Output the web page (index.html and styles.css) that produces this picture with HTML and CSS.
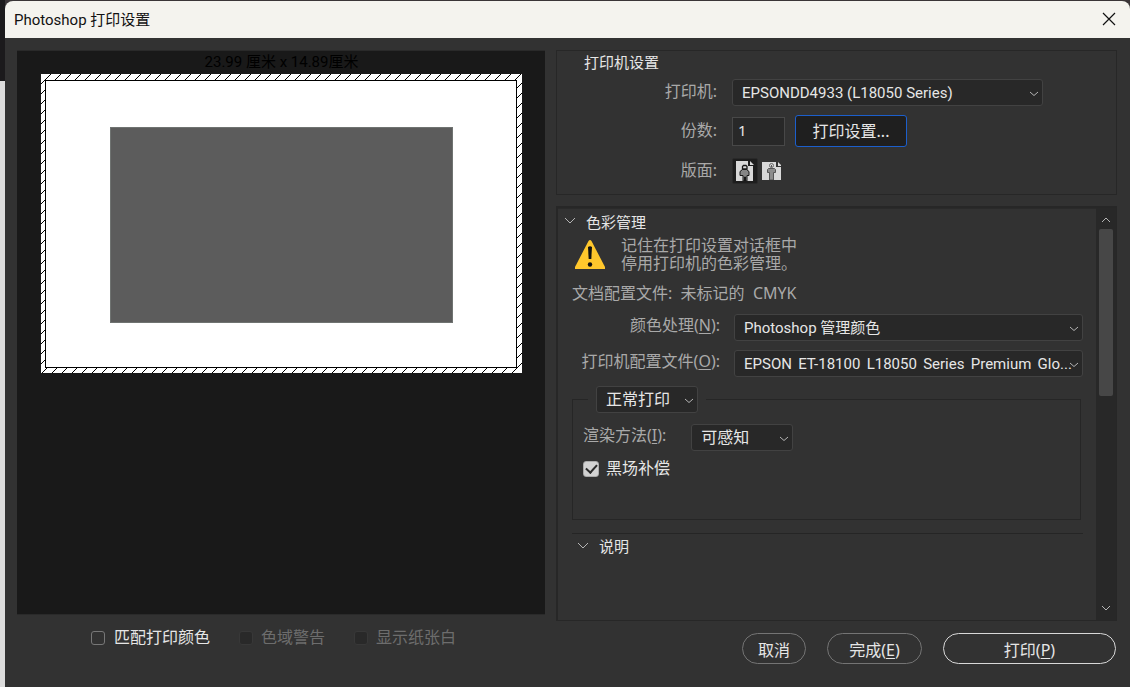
FILE: index.html
```html
<!DOCTYPE html>
<html lang="zh-CN">
<head>
<meta charset="utf-8">
<title>Photoshop 打印设置</title>
<link rel="stylesheet" href="styles.css">
</head>
<body>
<div class="desktop">
<div class="window">
  <header class="titlebar">
    <h1 class="title">Photoshop 打印设置</h1>
    <button class="close" type="button" aria-label="关闭">
      <svg width="14" height="14" viewBox="0 0 14 14"><path d="M1 1l12 12M13 1L1 13" stroke="#111" stroke-width="1.2" fill="none"/></svg>
    </button>
  </header>
  <main class="content">
    <section class="left">
      <div class="preview">
        <p class="size">23.99 厘米 x 14.89厘米</p>
        <div class="paper">
          <svg class="hatch" width="100%" height="100%" aria-hidden="true">
            <defs><pattern id="lines" width="10" height="10" patternUnits="userSpaceOnUse"><path d="M0 9h1v-1h1v-1h1v-1h1v-1h1v-1h1v-1h1v-1h1v-1h1v-1h1v1h-1v1h-1v1h-1v1h-1v1h-1v1h-1v1h-1v1h-1v1h-1v1h-1z" fill="#000"/></pattern></defs>
            <rect width="100%" height="100%" fill="url(#lines)"/>
          </svg>
          <div class="sheet"><div class="picture"></div></div>
        </div>
      </div>
      <div class="checks">
        <label class="check"><input type="checkbox">匹配打印颜色</label>
        <label class="check off"><input type="checkbox" disabled>色域警告</label>
        <label class="check off"><input type="checkbox" disabled>显示纸张白</label>
      </div>
    </section>
    <section class="right">
      <div class="printer">
        <h2 class="heading">打印机设置</h2>
        <div class="row">
          <label class="label" for="printer">打印机:</label>
          <div class="select wide"><select id="printer"><option>EPSONDD4933 (L18050 Series)</option></select><svg class="arrow" viewBox="0 0 10 6"><path d="M1 1l4 3.500 4-3.500"/></svg></div>
        </div>
        <div class="row tall">
          <label class="label" for="copies">份数:</label>
          <input class="copies" id="copies" type="text" value="1">
          <button class="setup" type="button">打印设置...</button>
        </div>
        <div class="row icons">
          <span class="label">版面:</span>
          <button class="orient on" type="button" aria-label="纵向">
            <svg width="18" height="20" viewBox="0 0 18 20"><path d="M0 0h12v5h5v15H0z" fill="#d8d8d8"/><path d="M14 0l4 4h-4z" fill="#d8d8d8"/><path d="M6.500 8.500h4l2.500 2v4h-2V20h-1.500v-4h-1v4H7v-5.500H4v-4z" fill="#858585" stroke="#161616"/><path d="M6.500 8V5.500l1-1h2.500l1 1V8z" fill="#d8d8d8" stroke="#161616" stroke-width="1.300"/></svg>
          </button>
          <button class="orient" type="button" aria-label="横向">
            <svg width="19" height="18" viewBox="0 0 19 18"><path d="M0 0h14v5h5v13H0z" fill="#d8d8d8"/><path d="M16 0l3 3v1h-3z" fill="#d8d8d8"/><path d="M6.500 6.500h6l1 1v3h-2V18h-4v-7.500h-2v-3z" fill="#8c8c8c" stroke="#555"/><circle cx="9.500" cy="3.500" r="2" fill="#d8d8d8" stroke="#666"/><path d="M9.500 3v2" stroke="#555"/></svg>
          </button>
        </div>
      </div>
      <div class="scroller">
        <div class="pane">
          <h2 class="section"><svg class="fold" viewBox="0 0 12 8"><path d="M1 1l5 5 5-5"/></svg>色彩管理</h2>
          <div class="warning">
            <svg width="30" height="29" viewBox="0 0 30 29"><path d="M13.500 1Q15-1 16.500 1L30 27v2H0v-2z" fill="#ffc72c"/><path d="M13 7q2-1.500 4 0l-.7 12h-2.600z" fill="#111"/><circle cx="15" cy="24.500" r="2.200" fill="#111"/></svg>
            <p>记住在打印设置对话框中<br>停用打印机的色彩管理。</p>
          </div>
          <p class="profile">文档配置文件:&nbsp; 未标记的&nbsp; CMYK</p>
          <div class="field">
            <label class="label" for="handling">颜色处理(<u>N</u>):</label>
            <div class="select"><select id="handling"><option>Photoshop 管理颜色</option></select><svg class="arrow" viewBox="0 0 10 6"><path d="M1 1l4 3.500 4-3.500"/></svg></div>
          </div>
          <div class="field">
            <label class="label" for="icc">打印机配置文件(<u>O</u>):</label>
            <div class="select"><select id="icc"><option>EPSON&#8198; ET-18100&#8198; L18050&#8198; Series&#8198; Premium&#8198; Glo...</option></select><svg class="arrow" viewBox="0 0 10 6"><path d="M1 1l4 3.500 4-3.500"/></svg></div>
          </div>
          <fieldset class="group">
            <legend><span class="select small"><select aria-label="打印类型"><option>正常打印</option></select><svg class="arrow" viewBox="0 0 10 6"><path d="M1 1l4 3.500 4-3.500"/></svg></span></legend>
            <div class="intent">
              <label for="intent">渲染方法(<u>I</u>):</label>
              <span class="select small"><select id="intent"><option>可感知</option></select><svg class="arrow" viewBox="0 0 10 6"><path d="M1 1l4 3.500 4-3.500"/></svg></span>
            </div>
            <label class="check"><input type="checkbox" checked>黑场补偿</label>
          </fieldset>
          <h2 class="section note"><svg class="fold" viewBox="0 0 12 8"><path d="M1 1l5 5 5-5"/></svg>说明</h2>
        </div>
        <div class="bar">
          <svg class="tip" viewBox="0 0 10 6"><path d="M1 5l4-4 4 4"/></svg>
          <div class="track"><div class="thumb"></div></div>
          <svg class="tip" viewBox="0 0 10 6"><path d="M1 1l4 4 4-4"/></svg>
        </div>
      </div>
      <footer class="actions">
        <button class="pill cancel" type="button">取消</button>
        <button class="pill done" type="button">完成(<u>E</u>)</button>
        <button class="pill print" type="button">打印(<u>P</u>)</button>
      </footer>
    </section>
  </main>
</div>
</div>
</body>
</html>
```
FILE: styles.css
```css
* { box-sizing: border-box; }
body, h1, h2, p { margin: 0; }
body, button, input, select {
  font-family: "Noto Sans", "Noto Sans CJK SC", sans-serif;
  font-size: 15px;
  font-weight: 400;
}
body { color: #e6e6e6; }
u { text-underline-offset: 2px; }
button { color: inherit; cursor: pointer; }

.desktop {
  display: flex;
  min-height: 100vh;
  padding: 1px 0 0 5px;
  background: linear-gradient(#1b1a1c 81px, #dcdcdc 81px);
}
.window {
  flex: 1;
  display: flex;
  flex-direction: column;
  background: #323232;
  border-radius: 8px 8px 0 0;
  box-shadow: 0 -4px 0 4px #3a3537;
  clip-path: inset(-1px 0 0 0);
}
.titlebar {
  display: flex;
  align-items: center;
  justify-content: space-between;
  height: 37px;
  padding: 0 14px 0 9px;
  background: #f4f3ee;
  border-radius: 8px 8px 0 0;
}
.title { color: #111; font-family: Roboto, "Noto Sans CJK SC", sans-serif; font-size: 15px; font-weight: 400; padding-bottom: 3px; }
.close { display: flex; padding: 0 0 1px; border: 0; background: none; }

.content {
  flex: 1;
  display: grid;
  grid-template-columns: 528fr 561fr;
  gap: 11px;
  padding: 12px 13px 23px 12px;
}
.left, .right { display: flex; flex-direction: column; min-width: 0; }

.preview {
  flex: 1;
  padding: 0 23px 0 24px;
  background: #191919;
  border: solid #2a2a2a;
  border-width: 1px 0;
}
.size { color: #000; line-height: 22px; padding-bottom: 1px; text-align: center; font-family: Roboto, "Noto Sans CJK SC", sans-serif; }
.paper {
  position: relative;
  display: flex;
  aspect-ratio: 481 / 299;
  padding: 6px 5px 5px 4px;
  background: #fff;
}
.hatch { position: absolute; inset: 0; }
.sheet {
  position: relative;
  flex: 1;
  display: flex;
  align-items: center;
  justify-content: center;
  padding: 2px 0 0 1px;
  background: #fff;
  border: 1px solid #000;
}
.picture { width: 73%; height: 69%; background: #5c5c5c; border: 1px solid #6f7371; }

.checks { display: flex; gap: 29px; height: 49px; padding: 11px 0 0 74px; }
.check { display: flex; align-items: center; gap: 9px; height: 20px; font-size: 16px; }
.check.off { color: #6d6d6d; gap: 8px; }
.check input {
  appearance: none;
  width: 14px;
  height: 14px;
  margin: 3px 0 0;
  border: 1px solid #777;
  border-radius: 3px;
}
.check.off input { border-color: #383838; background: #292929; }
.check input:checked {
  width: 16px;
  height: 16px;
  border-color: #aaa;
  background: linear-gradient(#d2d2d2, #d2d2d2);
  display: grid;
  place-items: center;
}
.check input:checked::after {
  content: "";
  width: 5px;
  height: 9px;
  margin-bottom: 2px;
  border: solid #2b2b2b;
  border-width: 0 2px 2px 0;
  transform: rotate(42deg);
}

.printer { height: 145px; border: 1px solid #272727; }
.heading { padding-left: 27px; font-size: 15px; font-weight: 400; line-height: 23px; }
.row { display: flex; align-items: center; height: 37px; }
.row.tall { height: 40px; }
.row.icons { height: 40px; }
.label { color: #a9a9a9; font-size: 16px; text-align: right; white-space: nowrap; }
.row .label { width: 160px; margin-right: 15px; padding-bottom: 3px; line-height: 22px; }
.select { position: relative; display: block; height: 27px; min-width: 0; }
.select.wide { width: 311px; }
.select.small { width: 102px; }
.select select {
  appearance: none;
  display: block;
  width: 100%;
  height: 27px;
  padding: 0 9px;
  font-family: Roboto, "Noto Sans CJK SC", sans-serif;
  color: #e6e6e6;
  background: #282828;
  border: 1px solid #424242;
  border-radius: 3px;
}
.select.small select { font-size: 16px; }
.arrow {
  position: absolute;
  right: 4px;
  top: 12px;
  width: 10px;
  height: 6px;
  pointer-events: none;
}
.arrow path, .fold path, .tip path { fill: none; stroke: #b5b5b5; stroke-width: 1; }
.copies {
  width: 53px;
  height: 29px;
  margin-right: 10px;
  padding: 0 5px 2px;
  color: #e6e6e6;
  background: #282828;
  border: 1px solid #484848;
}
.setup {
  width: 112px;
  height: 32px;
  padding: 0 0 3px;
  font-size: 16px;
  background: #1f1f1f;
  border: 1px solid #1c5fcc;
  border-radius: 3px;
}
.orient {
  display: grid;
  place-items: center;
  width: 26px;
  height: 26px;
  padding: 0;
  border: 1px solid transparent;
  border-radius: 2px;
  background: none;
}
.orient.on { background: #1d1d1d; border-color: #292929; }

.scroller { flex: 1; display: flex; margin-top: 11px; border: solid #272727; border-width: 2px 1px 1px 2px; }
.pane { flex: 1; min-width: 0; padding: 0 13px 0 14px; border-top: 1px solid #2a2a2a; }
.section { display: flex; align-items: center; gap: 10px; height: 24px; margin-left: -8px; font-size: 15px; font-weight: 400; }
.fold { width: 12px; height: 8px; }
.warning { display: flex; align-items: center; gap: 16px; height: 42px; padding-left: 3px; color: #a9a9a9; font-size: 16px; line-height: 18px; }
.profile { height: 39px; color: #a9a9a9; font-size: 16px; line-height: 36px; }
.field { display: grid; grid-template-columns: 148px 1fr; gap: 14px; height: 27px; margin-bottom: 9px; }
.field .label { line-height: 22px; }
.group {
  height: 134px;
  margin: 0 2px 0 0;
  padding: 11px 10px 0;
  border: 1px solid #262626;
}
.group legend { margin-left: 5px; padding: 0 8px; }
.intent { display: flex; gap: 25px; color: #a9a9a9; font-size: 16px; line-height: 22px; margin-bottom: 6px; }
.group .check { gap: 7px; }
.note { margin: 13px 0 0; padding-left: 5px; border-top: 1px solid #252525; }

.bar { display: flex; flex-direction: column; align-items: center; width: 20px; padding: 9px 0; background: #282828; }
.tip { width: 10px; height: 6px; }
.track { flex: 1; width: 14px; padding: 6px 0; }
.thumb { height: 45%; background: #474747; border-radius: 2px; }

.actions { display: flex; justify-content: flex-end; gap: 21px; margin-top: 12px; padding-right: 1px; }
.pill { height: 31px; padding: 0; font-size: 16px; background: none; border: 1px solid #747474; border-radius: 16px; }
.cancel { width: 64px; }
.done { width: 95px; }
.print { width: 173px; border-color: #d8d8d8; }
```
